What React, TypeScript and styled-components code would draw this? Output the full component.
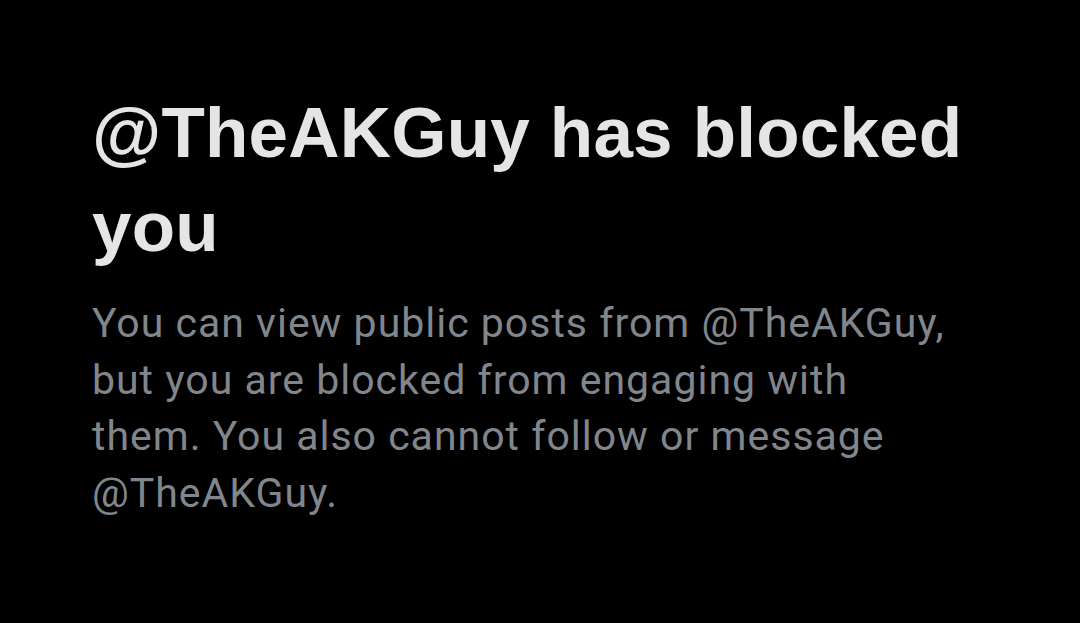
import React from "react";
import styled, { createGlobalStyle } from "styled-components";

const Global = createGlobalStyle`
  html, body { margin: 0; padding: 0; background: #000; }
  body { width: 1080px; height: 623px; overflow: hidden; }
`;

const Page = styled.main`
  width: 1080px;
  height: 623px;
  background: #000;
  box-sizing: border-box;
  padding: 86px 92px 0 92px;
  display: flex;
  flex-direction: column;
`;

const Title = styled.h1`
  margin: 0;
  font-family: "Liberation Sans", Arial, sans-serif;
  font-weight: 700;
  font-size: 71px;
  line-height: 94px;
  letter-spacing: 0.2px;
  color: #e4e5e6;
  max-width: 900px;
`;

const Body = styled.p`
  margin: 21px 0 0 0;
  font-family: Roboto, "Noto Sans", sans-serif;
  font-weight: 400;
  font-size: 41px;
  line-height: 56.7px;
  letter-spacing: 1px;
  color: #80868c;
  max-width: 864px;
`;

export default function App() {
  return (
    <>
      <Global />
      <Page>
        <Title>@TheAKGuy has blocked you</Title>
        <Body>
          You can view public posts from @TheAKGuy, but you are blocked from
          engaging with them. You also cannot follow or message @TheAKGuy.
        </Body>
      </Page>
    </>
  );
}
